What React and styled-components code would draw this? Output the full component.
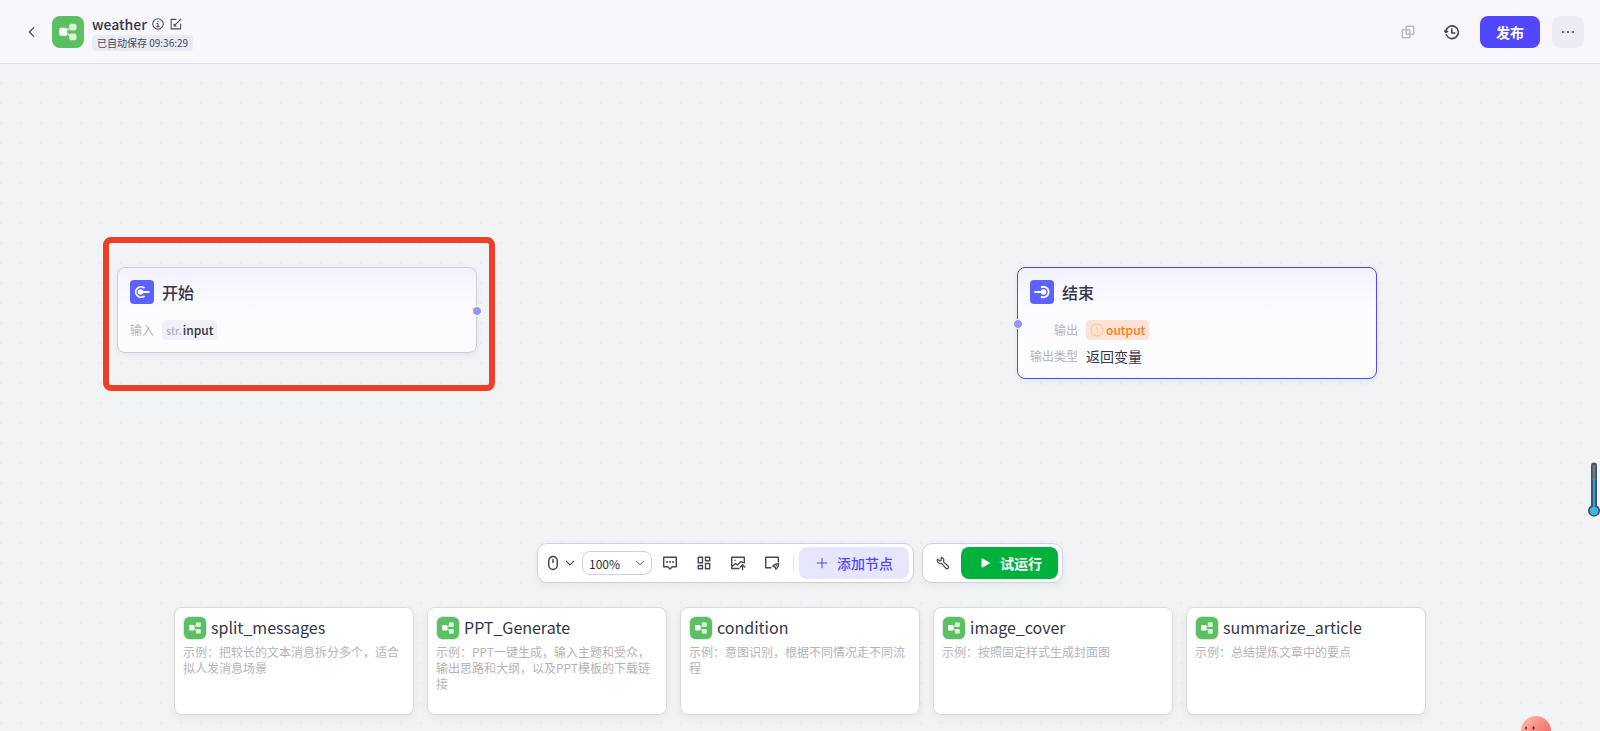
import React from 'react';
import styled, { createGlobalStyle } from 'styled-components';

const GlobalStyle = createGlobalStyle`
  * {
    box-sizing: border-box;
  }

  body {
    margin: 0;
    color: #34364a;
    font-family: "Noto Sans CJK SC", "Noto Sans", sans-serif;
    font-size: 14px;
  }

  button, select {
    margin: 0;
    padding: 0;
    border: 0;
    color: inherit;
    background: none;
    font-family: inherit;
    cursor: pointer;
  }

  h1, h2, p, dl, dd, ul {
    margin: 0;
    padding: 0;
  }

  svg {
    display: block;
    flex: none;
  }
`;

const Page = styled.div`
  display: flex;
  flex-direction: column;
  height: 100vh;
`;

const Header = styled.header`
  display: flex;
  align-items: center;
  justify-content: space-between;
  padding: 13px 16px 12px;
  background: #f7f7fc;
  border-bottom: 1px solid #dfdfeb;
`;

const HeaderGroup = styled.div`
  display: flex;
  align-items: center;
  gap: ${props => props.$gap}px;
`;

const IconButton = styled.button`
  display: flex;
  align-items: center;
  justify-content: center;
  width: 32px;
  height: 32px;
  border-radius: 8px;
  color: ${props => (props.disabled ? '#b9bacb' : '#44475c')};
  background: ${props => (props.$filled ? '#ebebf5' : 'none')};
`;

const PublishButton = styled.button`
  height: 32px;
  padding: 0 16px;
  border-radius: 8px;
  color: #fff;
  background: #5147ff;
  font-size: 14px;
  font-weight: 700;
`;

const TitleBlock = styled.div`
  margin-left: 4px;
`;

const TitleRow = styled.div`
  display: flex;
  align-items: center;
  gap: 4px;
  height: 22px;
`;

const Title = styled.h1`
  font-size: 14px;
  font-weight: 500;
  line-height: 20px;
`;

const SmallButton = styled.button`
  display: flex;
  padding: 0 1px;
  color: #45485d;
`;

const SaveTag = styled.span`
  display: block;
  padding: 0 5px;
  border-radius: 4px;
  color: #44475c;
  background: #ebebf5;
  font-size: 10px;
  line-height: 16px;
`;

const Canvas = styled.main`
  position: relative;
  flex: 1;
  display: flex;
  flex-direction: column;
  align-items: center;
  justify-content: flex-end;
  gap: 24px;
  padding-bottom: 16px;
  overflow: hidden;
  background-color: #f2f3f5;
  background-image: radial-gradient(circle, #ecedf0 1px, transparent 2px);
  background-size: 20px 20px;
  background-position: -9px 9px;
`;

const Node = styled.section`
  position: absolute;
  left: ${props => props.$x}px;
  top: ${props => props.$y}px;
  width: 360px;
  padding: 12px;
  border: 1px solid ${props => (props.$selected ? '#5147ff' : '#cccee0')};
  border-radius: 8px;
  background: linear-gradient(#f2f2ff, #fcfcff 42px);
  box-shadow: 0 2px 6px rgba(0, 0, 0, 0.06);
`;

const NodeHeader = styled.div`
  display: flex;
  align-items: center;
  gap: 8px;
  height: 24px;
  margin-bottom: 16px;
`;

const NodeIcon = styled.span`
  display: flex;
  width: 24px;
  height: 24px;
  border-radius: 4px;
  background: #5c62ff;
`;

const NodeTitle = styled.h2`
  font-size: 16px;
  font-weight: 500;
  line-height: 24px;
`;

const Fields = styled.dl`
  display: grid;
  grid-template-columns: max-content 1fr;
  column-gap: 8px;
  row-gap: 6px;
  line-height: 20px;
`;

const FieldName = styled.dt`
  color: #b2b4c6;
  font-size: 12px;
  text-align: right;
`;

const FieldValue = styled.dd`
  display: flex;
  height: 20px;
  font-size: 14px;
`;

const Variable = styled.span`
  display: flex;
  align-items: center;
  gap: ${props => (props.$warning ? 2 : 1)}px;
  padding: 0 4px;
  border-radius: 4px;
  color: ${props => (props.$warning ? '#ff7a0f' : '#34364a')};
  background: ${props => (props.$warning ? '#fbe4d5' : '#f0f0f7')};
  font-size: 12px;
  font-weight: 500;
`;

const VariableType = styled.span`
  color: #a8aabf;
  font-size: 11px;
  font-weight: 400;
`;

const Port = styled.span`
  position: absolute;
  top: 50%;
  ${props => (props.$side === 'left' ? 'left: -5px' : 'right: -6px')};
  width: 10px;
  height: 10px;
  margin-top: -4px;
  border: 1px solid #fff;
  border-radius: 50%;
  background: #9297f2;
`;

const Highlight = styled.div`
  position: absolute;
  left: 103px;
  top: 173px;
  width: 392px;
  height: 154px;
  border: 6px solid #ec3f25;
  border-radius: 8px;
  pointer-events: none;
`;

const Toolbars = styled.div`
  display: flex;
  gap: 8px;
`;

const Toolbar = styled.div`
  display: flex;
  align-items: center;
  gap: 2px;
  padding: 3px 4px;
  border: 1px solid #cfd0e2;
  border-radius: 10px;
  background: #fff;
  box-shadow: 0 3px 8px rgba(0, 0, 0, 0.05);
`;

const PointerButton = styled.button`
  display: flex;
  align-items: center;
  gap: 3px;
  height: 32px;
  padding: 0 4px 0 3px;
  color: #383b50;
`;

const ZoomBox = styled.label`
  position: relative;
  display: flex;
  align-items: center;
  color: #81849b;

  svg {
    position: absolute;
    right: 6px;
    pointer-events: none;
  }
`;

const ZoomSelect = styled.select`
  appearance: none;
  width: 70px;
  height: 24px;
  padding: 0 6px;
  border: 1px solid #cfd0e2;
  border-radius: 8px;
  color: #2b2e43;
  font-size: 12px;
`;

const Divider = styled.span`
  width: 1px;
  height: 16px;
  margin: 0 3px;
  background: #e6e6ef;
`;

const ActionButton = styled.button`
  display: flex;
  align-items: center;
  gap: 8px;
  height: 32px;
  padding: 0 16px;
  border-radius: 8px;
  color: ${props => (props.$primary ? '#fff' : '#5147ff')};
  background: ${props => (props.$primary ? '#00b23c' : '#e6e7ff')};
  font-size: 14px;
  font-weight: ${props => (props.$primary ? 700 : 500)};
`;

const Examples = styled.ul`
  display: flex;
  gap: 13px;
  list-style: none;
`;

const ExampleCard = styled.li`
  width: 240px;
  height: 108px;
  padding: 8px;
  border: 1px solid #d9dadd;
  border-radius: 8px;
  background: #fff;
  box-shadow: 0 3px 8px rgba(0, 0, 0, 0.06);
`;

const ExampleTitle = styled.h2`
  display: flex;
  gap: 4px;
  height: 24px;
  font-size: 16px;
  font-weight: 400;
  line-height: 22px;
`;

const ExampleIcon = styled.span`
  width: 24px;
  height: 24px;
  border: 1px solid #e4e6e6;
  border-radius: 6px;
`;

const ExampleText = styled.p`
  margin-top: 4px;
  color: #b4b4b7;
  font-size: 12px;
  line-height: 16px;
`;

const Thermometer = styled.svg`
  position: absolute;
  top: 398px;
  right: 0;
`;

const Mascot = styled.svg`
  position: absolute;
  right: 48px;
  bottom: 0;
`;

const Icon = ({ size = 16, width = 1.4, children }) => (
  <svg
    width={size}
    height={size}
    viewBox="0 0 16 16"
    fill="none"
    stroke="currentColor"
    strokeWidth={width}
    strokeLinecap="round"
    strokeLinejoin="round"
    aria-hidden="true"
  >
    {children}
  </svg>
);

const ChevronDown = () => <Icon size={12}><path d="M3 5.500l5 5 5-5" /></Icon>;

const WorkflowLogo = ({ size }) => (
  <svg width={size} height={size} viewBox="0 0 32 32" aria-hidden="true">
    <rect width="32" height="32" rx="8" fill="#5bc062" />
    <path d="M14 15l5-3.500M14 16.500l5 4" stroke="#bfe6c1" strokeWidth="1.800" />
    <rect x="17.300" y="7.800" width="7.200" height="6.700" rx="1.800" fill="#d9f0db" />
    <rect x="17.300" y="17.600" width="7.200" height="6.700" rx="1.800" fill="#d9f0db" />
    <rect x="7.300" y="11.800" width="7.700" height="8" rx="1.500" fill="#fff" />
  </svg>
);

const StartIcon = () => (
  <svg width="24" height="24" viewBox="0 0 24 24" fill="none" stroke="#fff" strokeWidth="1.800" aria-hidden="true">
    <path d="M14.500 8.200A5.200 5.200 0 1 0 14.500 15.800M11 12h8.500" />
    <circle cx="10.500" cy="12" r="2.800" fill="#fff" stroke="none" />
  </svg>
);

const EndIcon = () => (
  <svg width="24" height="24" viewBox="0 0 24 24" fill="none" stroke="#fff" strokeWidth="1.800" aria-hidden="true">
    <path d="M11 7.400A5.200 5.200 0 1 1 11 16.600M4.500 12h9" />
    <circle cx="13.500" cy="12" r="2.800" fill="#fff" stroke="none" />
  </svg>
);

const examples = [
  { name: 'split_messages', text: '示例：把较长的文本消息拆分多个，适合拟人发消息场景' },
  { name: 'PPT_Generate', text: '示例：PPT一键生成，输入主题和受众，输出思路和大纲，以及PPT模板的下载链接' },
  { name: 'condition', text: '示例：意图识别，根据不同情况走不同流程' },
  { name: 'image_cover', text: '示例：按照固定样式生成封面图' },
  { name: 'summarize_article', text: '示例：总结提炼文章中的要点' },
];

const TopBar = () => (
  <Header>
    <HeaderGroup $gap={4}>
      <IconButton aria-label="返回">
        <Icon size={14}><path d="M10 3L5 8l5 5" /></Icon>
      </IconButton>
      <WorkflowLogo size={32} />
      <TitleBlock>
        <TitleRow>
          <Title>weather</Title>
          <SmallButton aria-label="详情">
            <Icon size={12}>
              <circle cx="8" cy="8" r="7" />
              <path d="M6.500 7.200H8v4.300M6.500 11.500h3M8 4.300v.5" />
            </Icon>
          </SmallButton>
          <SmallButton aria-label="编辑">
            <Icon size={12}>
              <path d="M8 1.800H1.500v12.700h12.700V8M6.500 9.500l8-8M5.500 8v2.500H8" />
            </Icon>
          </SmallButton>
        </TitleRow>
        <SaveTag>已自动保存 09:36:29</SaveTag>
      </TitleBlock>
    </HeaderGroup>
    <HeaderGroup $gap={12}>
      <IconButton disabled aria-label="创建副本">
        <Icon size={14} width={1.7}>
          <path d="M8.500 10.500h6v-9H6v6M7.500 5.500h-6v9H10v-6" />
          <path d="M6 7.500v3h2.500M10 8.500v-3H7.500" />
        </Icon>
      </IconButton>
      <IconButton aria-label="历史版本">
        <Icon width={1.6}>
          <path d="M2.300 10.800A6.300 6.300 0 1 0 1.900 7M.7 7l1.200 1.600L3.600 7.400M7.800 5v4h3" />
        </Icon>
      </IconButton>
      <PublishButton>发布</PublishButton>
      <IconButton $filled aria-label="更多">
        <Icon width={0}>
          <g fill="currentColor">
            <circle cx="3" cy="8" r="1.100" />
            <circle cx="8" cy="8" r="1.100" />
            <circle cx="13" cy="8" r="1.100" />
          </g>
        </Icon>
      </IconButton>
    </HeaderGroup>
  </Header>
);

const BottomTools = () => (
  <Toolbars>
    <Toolbar>
      <PointerButton aria-label="交互方式">
        <Icon><path d="M8 1.500a4.200 4.200 0 0 1 4.200 4.200v4.600a4.200 4.200 0 0 1-8.400 0V5.700A4.200 4.200 0 0 1 8 1.500zM8 4.500v3" /></Icon>
        <ChevronDown />
      </PointerButton>
      <ZoomBox aria-label="缩放">
        <ZoomSelect defaultValue="100">
          <option value="50">50%</option>
          <option value="100">100%</option>
          <option value="150">150%</option>
        </ZoomSelect>
        <ChevronDown />
      </ZoomBox>
      <IconButton aria-label="注释">
        <Icon>
          <path d="M1.700 2.200h12.600v9.600h-4L8 14l-2.300-2.200h-4z" />
          <path d="M5 7h.1M8 7h.1M11 7h.1" strokeWidth="1.800" />
        </Icon>
      </IconButton>
      <IconButton aria-label="优化布局">
        <Icon>
          <path d="M2.300 2.300h4.200v5.400H2.300zM9.500 2.300h4.200v3.400H9.500zM2.300 10.500h4.200v3.200H2.300zM9.500 8.500h4.200v5.200H9.500z" />
        </Icon>
      </IconButton>
      <IconButton aria-label="导出图片">
        <Icon>
          <path d="M9 13.500H1.700V2.300h12.600v5.500M2 11.500l3.500-3L7.500 10l3.500-3.500 2 1.200M5 5.200h.1M12.500 14.500v-4.300M10.300 12l2.200-2.200 2.200 2.200" />
        </Icon>
      </IconButton>
      <IconButton aria-label="缩略图">
        <Icon>
          <path d="M7 12.800H1.700V2.300h12.600v4.500" />
          <path d="M8.700 11.200c1.500-2 4-2.500 6-2.600-.2 2-.7 4-2.700 5.600l-1-2.200zM12.300 10.800h.1" />
        </Icon>
      </IconButton>
      <Divider />
      <ActionButton>
        <Icon size={14} width={1.2}><path d="M8 2.500v11M2.500 8h11" /></Icon>
        添加节点
      </ActionButton>
    </Toolbar>
    <Toolbar>
      <IconButton aria-label="调试">
        <Icon size={14}>
          <path d="M6 1.500L5.800 5l-1.600.6L1.700 3.500C.8 6.500 3 9.200 6.300 8.500l5 5.500c1.700 1.500 4-.7 2.500-2.500L8.600 6.700C9.500 4 8.500 2 6 1.500z" />
        </Icon>
      </IconButton>
      <ActionButton $primary>
        <svg width="15" height="14" viewBox="0 0 15 14" fill="currentColor" aria-hidden="true">
          <path d="M4.500 3.200c0-.7.600-1 1.200-.7l6.800 3.900c.5.300.5.900 0 1.200l-6.800 3.900c-.6.300-1.200 0-1.200-.7z" />
        </svg>
        试运行
      </ActionButton>
    </Toolbar>
  </Toolbars>
);

const App = () => {
  const cards = examples.map(example =>
    (<ExampleCard key={example.name}>
      <ExampleTitle>
        <ExampleIcon><WorkflowLogo size={22} /></ExampleIcon>
        {example.name}
      </ExampleTitle>
      <ExampleText>{example.text}</ExampleText>
    </ExampleCard>),
  );

  return (
    <Page>
      <GlobalStyle />
      <TopBar />
      <Canvas>
        <Node $x={117} $y={203}>
          <NodeHeader>
            <NodeIcon><StartIcon /></NodeIcon>
            <NodeTitle>开始</NodeTitle>
          </NodeHeader>
          <Fields>
            <FieldName>输入</FieldName>
            <FieldValue>
              <Variable><VariableType>str.</VariableType>input</Variable>
            </FieldValue>
          </Fields>
          <Port $side="right" />
        </Node>
        <Node $x={1017} $y={203} $selected>
          <NodeHeader>
            <NodeIcon><EndIcon /></NodeIcon>
            <NodeTitle>结束</NodeTitle>
          </NodeHeader>
          <Fields>
            <FieldName>输出</FieldName>
            <FieldValue>
              <Variable $warning>
                <svg width="14" height="14" viewBox="0 0 14 14" fill="none" stroke="#fbc297" aria-hidden="true">
                  <circle cx="7" cy="7" r="6" />
                  <path d="M7 3.800v3.700M7 9.200v1.200" />
                </svg>
                output
              </Variable>
            </FieldValue>
            <FieldName>输出类型</FieldName>
            <FieldValue>返回变量</FieldValue>
          </Fields>
          <Port $side="left" />
        </Node>
        <Highlight />
        <BottomTools />
        <Examples>{cards}</Examples>
        <Thermometer width="12" height="56" viewBox="0 0 12 56" aria-hidden="true">
          <path d="M3 3.500a3 3 0 0 1 6 0v40a6 6 0 1 1-6 0z" fill="#43525e" />
          <path d="M4.500 4a1.500 1.500 0 0 1 3 0v14h-3z" fill="#6b7a84" />
          <path d="M5 17h2v28H5z" fill="#1ea5e6" />
          <circle cx="6" cy="49" r="4.300" fill="#38b8ea" />
        </Thermometer>
        <Mascot width="32" height="15" viewBox="0 0 32 15" aria-hidden="true">
          <defs>
            <linearGradient id="mascot" x1="0" y1="0" x2="1" y2="1">
              <stop offset="0.200" stopColor="#ffab9a" />
              <stop offset="0.700" stopColor="#f4716b" />
            </linearGradient>
          </defs>
          <circle cx="16" cy="15" r="15" fill="url(#mascot)" />
          <ellipse cx="6" cy="12" rx="0.800" ry="1.600" fill="#3c2a30" />
          <ellipse cx="13.500" cy="12" rx="1" ry="1.800" fill="#3c2a30" />
        </Mascot>
      </Canvas>
    </Page>
  );
};

export default App;
